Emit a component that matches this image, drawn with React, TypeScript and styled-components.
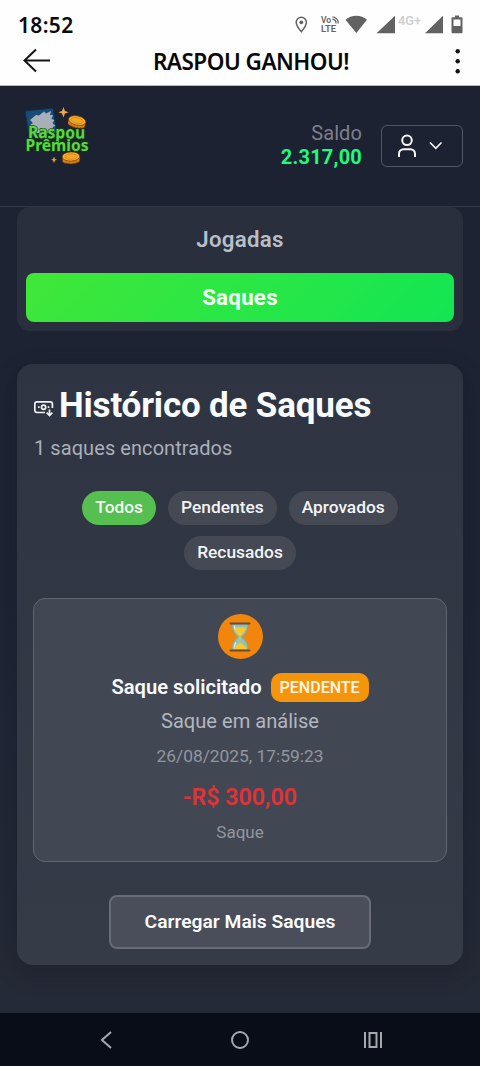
import React from 'react';
import styled, { createGlobalStyle } from 'styled-components';

const GlobalStyle = createGlobalStyle`
  * { box-sizing: border-box; }
  body { margin: 0; background: #1e2433; font-family: Roboto, "Liberation Sans", sans-serif; color: #fff; }
  button { font-family: inherit; margin: 0; padding: 0; border: 0; color: inherit; }
  svg { display: block; flex: none; }
  h1, h2, p { margin: 0; font-weight: 400; }
`;

const Screen = styled.div`
  width: 480px;
  height: 1066px;
  overflow: hidden;
  display: flex;
  flex-direction: column;
  background: linear-gradient(180deg, #1c2231 0%, #1e2434 55%, #252a37 95%);
`;

const StatusBar = styled.div`
  height: 44px;
  flex: none;
  padding: 5px 16px 0 18px;
  display: flex;
  align-items: center;
  justify-content: space-between;
  background: #fefefe;
`;

const Clock = styled.span`
  font: 600 21px/30px "Noto Sans", "Open Sans", sans-serif;
  letter-spacing: 0.35px;
  color: #0b0b0b;
`;

const TitleBar = styled.div`
  height: 42px;
  flex: none;
  padding: 0 16px 8px 22px;
  display: flex;
  align-items: center;
  justify-content: space-between;
  background: #fefefe;
  border-bottom: 1px solid #b9bac0;
`;

const PageTitle = styled.h1`
  padding-top: 3px;
  padding-right: 2px;
  font: 600 22.5px/30px "Noto Sans", "Open Sans", sans-serif;
  letter-spacing: -0.5px;
  color: #080808;
  white-space: nowrap;
`;

const Header = styled.header`
  height: 121px;
  flex: none;
  padding: 0 17px 0 22px;
  display: flex;
  align-items: center;
  border-bottom: 1px solid #323846;
  background: #1c2231;
`;

const Balance = styled.div`
  margin-left: auto;
  margin-right: 19px;
  text-align: right;
`;

const BalanceLabel = styled.p`
  margin-top: -2px;
  font-size: 20px;
  line-height: 24px;
  letter-spacing: 0.1px;
  color: #7c808c;
`;

const BalanceValue = styled.p`
  font-size: 20px;
  line-height: 24px;
  font-weight: 700;
  letter-spacing: 0.2px;
  color: #1bfd7b;
`;

const ProfileButton = styled.button`
  width: 82px;
  height: 42px;
  padding: 0 0 0 15px;
  display: flex;
  align-items: center;
  gap: 12px;
  border: 1px solid #515764;
  border-radius: 6px;
  background: transparent;
`;

const Content = styled.main`
  flex: 1;
  min-height: 0;
  padding: 0 17px;
`;

const Tabs = styled.div`
  height: 124px;
  padding: 9px 9px;
  border-radius: 13px;
  background: #292f3c;
`;

const Tab = styled.button<{ $active?: boolean }>`
  display: block;
  width: 100%;
  height: ${p => (p.$active ? '49px' : '48px')};
  margin-bottom: 9px;
  padding-bottom: 2px;
  border-radius: 8px;
  font-size: 22.3px;
  letter-spacing: 0.25px;
  font-weight: ${p => (p.$active ? 700 : 600)};
  color: ${p => (p.$active ? '#f4fff4' : '#b9bec8')};
  background: ${p => (p.$active ? 'linear-gradient(135deg, #41e737, #12e653)' : 'transparent')};
`;

const History = styled.section`
  height: 601px;
  margin-top: 33px;
  padding: 17px 16px;
  border-radius: 16px;
  display: flex;
  flex-direction: column;
  background: linear-gradient(180deg, #2e3441, #363b48);
  box-shadow: 0 8px 24px rgba(10, 14, 24, 0.22);
`;

const Heading = styled.div`
  display: flex;
  align-items: center;
  gap: 5px;
  height: 48px;
  padding-left: 1px;
`;

const HeadingText = styled.h2`
  padding-top: 1px;
  font-size: 35px;
  font-weight: 700;
  line-height: 48px;
  letter-spacing: -0.18px;
  white-space: nowrap;
  color: #f8fafc;
`;

const Count = styled.p`
  margin-top: 6px;
  padding-left: 1px;
  font-size: 20px;
  line-height: 26px;
  letter-spacing: 0.07px;
  color: #a9afba;
`;

const Filters = styled.div`
  margin-top: 30px;
  display: flex;
  flex-wrap: wrap;
  justify-content: center;
  gap: 11px 12px;
`;

const Filter = styled.button<{ $active?: boolean }>`
  height: 34px;
  padding: 0 13px 2px;
  border-radius: 17px;
  font-size: 17.35px;
  font-weight: 500;
  color: #f2f4f7;
  background: ${p => (p.$active ? '#55bf50' : '#444954')};
`;

const Entry = styled.article`
  height: 264px;
  flex: none;
  margin-top: 28px;
  padding-top: 15px;
  display: flex;
  flex-direction: column;
  align-items: center;
  border: 1px solid #606570;
  border-radius: 12px;
  background: #424853;
`;

const EntryIcon = styled.div`
  width: 45px;
  height: 45px;
  border-radius: 50%;
  display: grid;
  place-items: center;
  background: #f2860d;
`;

const EntryTitle = styled.div`
  margin-top: 13px;
  display: flex;
  align-items: center;
  gap: 9px;
  height: 30px;
  font-size: 20.2px;
  font-weight: 600;
  color: #fafbfc;
`;

const Badge = styled.span`
  height: 29px;
  padding: 0 9px;
  border-radius: 10px;
  font-size: 16px;
  font-weight: 500;
  line-height: 29px;
  color: #fff6e6;
  background: #f5950b;
`;

const EntryLine = styled.p<{ $size: number; $height: number; $color: string; $top: number; $weight?: number }>`
  margin-top: ${p => p.$top}px;
  font-size: ${p => p.$size}px;
  line-height: ${p => p.$height}px;
  font-weight: ${p => p.$weight ?? 400};
  color: ${p => p.$color};
`;

const LoadMore = styled.button`
  width: 262px;
  height: 54px;
  flex: none;
  align-self: center;
  margin-top: 33px;
  padding-bottom: 1px;
  border: 2px solid #676c77;
  border-radius: 8px;
  font-size: 19.25px;
  font-weight: 600;
  color: #fafbfc;
  background: #494e5a;
`;

const NavBar = styled.nav`
  height: 53px;
  flex: none;
  padding: 0 96px;
  display: flex;
  align-items: center;
  justify-content: space-between;
  background: #080d17;
`;

const StatusIcons = () => (
  <svg width="176" height="24" viewBox="0 0 176 24" fill="#626262">
    <path d="M13.3 4.2a5.1 5.1 0 0 0-5.1 5.1c0 3.6 5.1 9.4 5.1 9.4s5.1-5.8 5.1-9.4a5.1 5.1 0 0 0-5.1-5.1z" fill="none" stroke="#626262" strokeWidth="1.5" />
    <circle cx="13.3" cy="9.3" r="1.9" />
    <text x="33" y="10" fontFamily="Roboto, sans-serif" fontSize="8.5" fontWeight="600">Vo</text>
    <text x="33" y="19.3" fontFamily="Roboto, sans-serif" fontSize="9" fontWeight="600" textLength="15" lengthAdjust="spacingAndGlyphs">LTE</text>
    <g fill="none" stroke="#626262" strokeWidth="1.2">
      <path d="M44.5 6.2a4 4 0 0 1 3.5 4.3M44.5 3.8a6.2 6.2 0 0 1 5.7 6.7" />
    </g>
    <path d="M57.5 6.8a16 16 0 0 1 21.5 0L68.3 20z" />
    <path d="M107 2.7V20.2H88.5z" />
    <text x="110" y="12" fontFamily="Roboto, sans-serif" fontSize="12" fontWeight="500" textLength="23" lengthAdjust="spacingAndGlyphs" fill="#cdcdcd">4G+</text>
    <path d="M155 2.7V20.2H137z" />
    <path fillRule="evenodd" d="M167 2.5h4v1.8h2.5q1 0 1 1v14q0 1-1 1h-9q-1 0-1-1v-14q0-1 1-1h2.5zM165.5 6.5V13h7V6.5z" />
  </svg>
);

const BackArrow = () => (
  <svg width="30" height="26" viewBox="0 0 30 26" fill="none" stroke="#151515" strokeWidth="2">
    <path d="M28 12.5H2.5M14 1.5 2.5 12.5 14 23.5" />
  </svg>
);

const MoreDots = () => (
  <svg width="12" height="26" viewBox="0 0 12 26" fill="#111">
    <circle cx="5.7" cy="3.2" r="2.2" />
    <circle cx="5.7" cy="13.2" r="2.2" />
    <circle cx="5.7" cy="23.2" r="2.2" />
  </svg>
);

const Coin = ({ x, y, r }: { x: number; y: number; r: number }) => (
  <g transform={`translate(${x} ${y}) rotate(${r})`} stroke="#4d2c12" strokeWidth=".6">
    <path d="M-8.8-1V3C-8.8 7.6 8.8 7.6 8.8 3V-1z" fill="#dc7d12" />
    <ellipse cy="-1" rx="8.8" ry="4.6" fill="#f9b32c" />
    <ellipse cy="-1" rx="6.2" ry="2.8" fill="#f5a724" stroke="#c8720f" strokeWidth=".6" />
    <path d="M-5 4.2v1.5M-1.7 5v1.5M1.7 5v1.5M5 4.2v1.5" stroke="#8b4910" />
  </g>
);

const LogoMark = styled.svg`
  align-self: flex-start;
  margin-top: 20px;
`;

const Logo = () => (
  <LogoMark width="68" height="64" viewBox="0 0 68 64">
    <path d="M3 5 31 2 35 27 7 31z" fill="#174c78" stroke="#102d4b" />
    <path d="m8 14 6-5 3 .5 5-4 2 2 5-2.5-1 4 3 0-1.5 4 3 1-2 3 3 3-3 1 3 4-3 2H13l-1-6-4-2 3-2z" fill="#a8afb8" />
    <path d="m41.5 1 1.4 4 3.8 1.2-3.8 1.2-1.4 4.1-1.4-4.1-3.8-1.2L40.1 5z" fill="#f8a548" />
    <path d="m32 50.5 1 2.5 2 .8-2 .8-1 2.5-1-2.5-2-.8 2-.8z" fill="#dfa72c" />
    <Coin x={55} y={15.5} r={13} />
    <Coin x={49} y={51.5} r={-2} />
    <g fontFamily="'Noto Sans', 'Open Sans', sans-serif" fontWeight="700" fill="#5ad836" stroke="#163e24" strokeWidth="1.4" paintOrder="stroke">
      <text x="6" y="32" fontSize="17" textLength="57" lengthAdjust="spacingAndGlyphs" transform="rotate(.6 6 32)">Raspou</text>
      <text x="3.5" y="45" fontSize="16" textLength="63" lengthAdjust="spacingAndGlyphs">Prêmios</text>
    </g>
  </LogoMark>
);

const PersonIcon = () => (
  <svg width="20" height="24" viewBox="0 0 20 24" fill="none" stroke="#f4f5f7" strokeWidth="2">
    <circle cx="10" cy="6.3" r="4.8" />
    <path d="M2 23v-3.2a4.6 4.6 0 0 1 4.6-4.6h6.8a4.6 4.6 0 0 1 4.6 4.6V23" />
  </svg>
);

const ChevronDown = () => (
  <svg width="14" height="10" viewBox="0 0 14 10" fill="none" stroke="#f4f5f7" strokeWidth="1.7" strokeLinecap="round">
    <path d="m1.5 2 5.3 5.3L12 2" />
  </svg>
);

const CashIcon = () => (
  <svg width="20" height="23" viewBox="0 -6 20 23" fill="none" stroke="#f1f3f6" strokeWidth="1.7">
    <path d="M11 12.5H3A2.2 2.2 0 0 1 .8 10.3V4A2.2 2.2 0 0 1 3 1.8h13.2A2.2 2.2 0 0 1 18.4 4v4" />
    <circle cx="9.6" cy="7.2" r="2.1" />
    <path d="M4 7.2h1.6M13.7 7.2h1.6M15.5 9.5v6M12.7 12.7l2.8 2.8 2.8-2.8" />
  </svg>
);

const Hourglass = () => (
  <svg width="24" height="32" viewBox="0 0 24 32">
    <path d="M4 3h16c0 7-3 10-6.3 13C17 19 20 22 20 29H4c0-7 3-10 6.3-13C7 13 4 10 4 3z" fill="#8fc2bd" stroke="#6da5a5" strokeWidth=".7" />
    <path d="M6 7.5c3-2 8-1 12-.8-.8 3.6-3 5.8-6 8.5-3-2.6-5.2-4.3-6-7.7z" fill="#fac92e" />
    <path d="M12 14v8c2.7 1.3 5 3.4 6.4 6H5.6c1.5-2.6 3.7-4.7 6.4-6" fill="#fac92e" stroke="#fac92e" strokeWidth=".6" />
    <path d="M6.5 4.5c0 2 .2 3 .7 4M8 21.5c-1.3 1.8-1.7 3.5-1.9 5" stroke="#d2eee9" strokeWidth="1.4" fill="none" />
    <path d="M2.5 2.5h19M2.5 29.5h19" stroke="#6b4a39" strokeWidth="1.9" strokeLinecap="round" />
  </svg>
);

const NavBack = () => (
  <svg width="22" height="20" viewBox="0 0 22 20" fill="none" stroke="#a5a8ad" strokeWidth="2">
    <path d="M15 2 6 10l9 8" />
  </svg>
);

const NavHome = () => (
  <svg width="20" height="20" viewBox="0 0 20 20" fill="none" stroke="#a5a8ad" strokeWidth="2">
    <circle cx="10" cy="10" r="8" />
  </svg>
);

const NavRecents = () => (
  <svg width="22" height="20" viewBox="0 0 22 20" fill="none" stroke="#a5a8ad" strokeWidth="2">
    <path d="M3 2v16M19 2v16M7.5 3h7v14h-7z" />
  </svg>
);

const filters = ['Todos', 'Pendentes', 'Aprovados', 'Recusados'];

export default function App() {
  return (
    <>
      <GlobalStyle />
      <Screen>
        <StatusBar>
          <Clock>18:52</Clock>
          <StatusIcons />
        </StatusBar>
        <TitleBar>
          <BackArrow />
          <PageTitle>RASPOU GANHOU!</PageTitle>
          <MoreDots />
        </TitleBar>
        <Header>
          <Logo />
          <Balance>
            <BalanceLabel>Saldo</BalanceLabel>
            <BalanceValue>2.317,00</BalanceValue>
          </Balance>
          <ProfileButton aria-label="Perfil">
            <PersonIcon />
            <ChevronDown />
          </ProfileButton>
        </Header>
        <Content>
          <Tabs>
            <Tab>Jogadas</Tab>
            <Tab $active>Saques</Tab>
          </Tabs>
          <History>
            <Heading>
              <CashIcon />
              <HeadingText>Histórico de Saques</HeadingText>
            </Heading>
            <Count>1 saques encontrados</Count>
            <Filters>
              {filters.map((name, i) => (
                <Filter key={name} $active={i === 0}>{name}</Filter>
              ))}
            </Filters>
            <Entry>
              <EntryIcon><Hourglass /></EntryIcon>
              <EntryTitle>
                Saque solicitado
                <Badge>PENDENTE</Badge>
              </EntryTitle>
              <EntryLine $size={20.1} $height={26} $color="#b2b6be" $top={6}>Saque em análise</EntryLine>
              <EntryLine $size={17.35} $height={24} $color="#92969f" $top={10}>26/08/2025, 17:59:23</EntryLine>
              <EntryLine $size={23.2} $height={30} $color="#e03338" $top={14} $weight={600}>-R$ 300,00</EntryLine>
              <EntryLine $size={17} $height={22} $color="#92969f" $top={9}>Saque</EntryLine>
            </Entry>
            <LoadMore>Carregar Mais Saques</LoadMore>
          </History>
        </Content>
        <NavBar>
          <NavBack />
          <NavHome />
          <NavRecents />
        </NavBar>
      </Screen>
    </>
  );
}
